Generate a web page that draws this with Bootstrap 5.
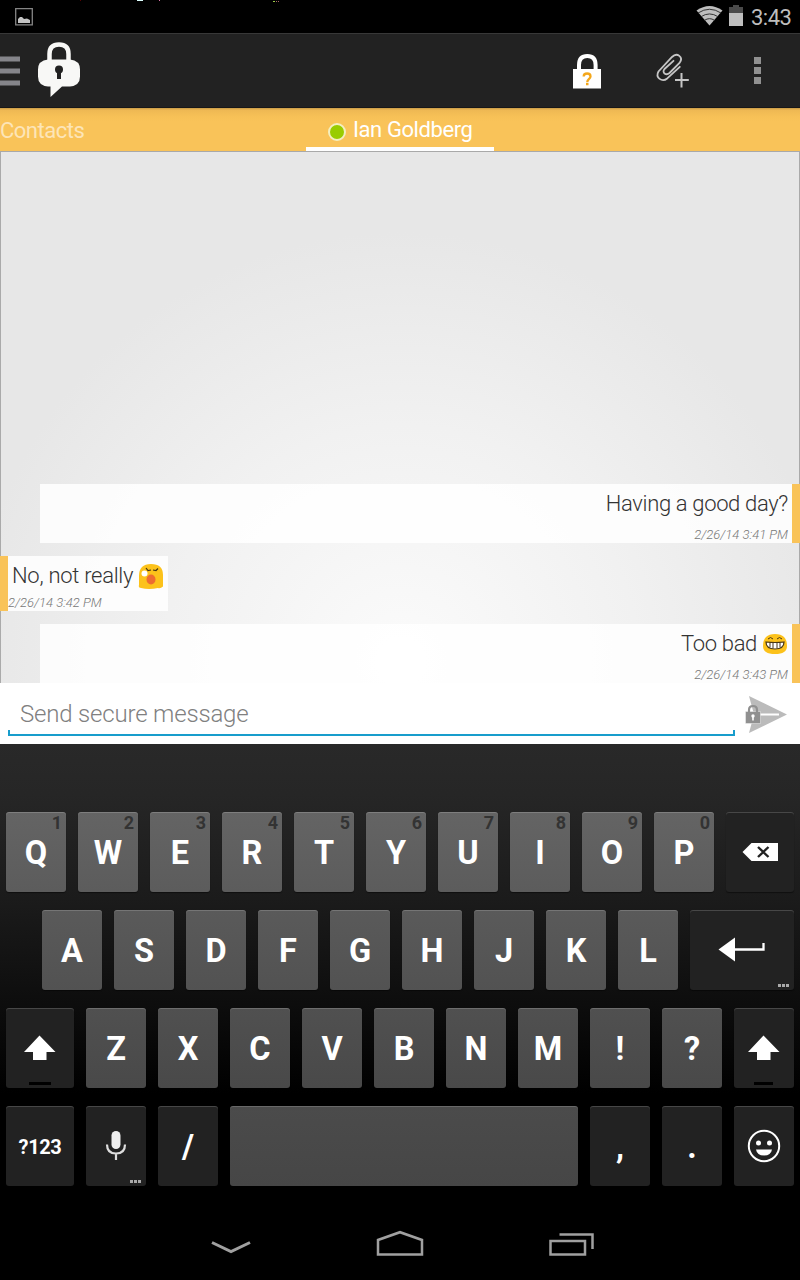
<!DOCTYPE html>
<html lang="en">
<head>
<meta charset="utf-8">
<meta name="viewport" content="width=device-width, initial-scale=1">
<title>Secure chat</title>
<link href="https://cdn.jsdelivr.net/npm/bootstrap@5.3.0/dist/css/bootstrap.min.css" rel="stylesheet">
<style>
body{font-family:Roboto,"Liberation Sans",sans-serif;background:#000;width:800px;height:1280px;overflow:hidden;line-height:1}
svg{display:block;flex:none}
.status-bar{height:33px;color:#bebebe;font-size:22px}
.clock{width:41px;line-height:35px;white-space:nowrap;letter-spacing:-.5px}
.action-bar{height:75px;background:#222;border-top:1px solid #383838;border-bottom:1px solid #171717}
.tab-strip{height:44px;background:linear-gradient(#c79a48 0,#eeb853 2px,#f6c056 8px,#f9c359 14px);border-bottom:1px solid #a9a9a9;font-size:22px;line-height:45px;letter-spacing:-.42px}
.tab-side{width:306px;color:#fde5b8;letter-spacing:-.5px}
.tab-current{width:188px;color:#fff;border-bottom:4px solid #fff;padding:4px 0 0 22px;height:43px}
.dot{width:18px;height:18px;border-radius:50%;background:#9c0;border:2px solid #f3efc0;margin:4px 7px 0 0}
.chat{height:531px;background:radial-gradient(ellipse 430px 430px at 400px 510px,#fbfbfb,#f1f1f1 55%,#e7e7e7);border-left:1px solid #aaa;border-right:1px solid #aaa}
.bubble{background:rgba(255,255,255,.85);color:#333;font-size:22px;font-weight:300}
.sent{height:59px;margin-left:39px;margin-right:-1px;border-right:8px solid #f9c359;padding:8px 4px 0 0;text-align:right}
.received{height:55px;width:168px;margin:13px 0 13px -1px;border-left:8px solid #f9c359;padding-top:8px}
.line-text{height:24px;line-height:24px;white-space:nowrap;letter-spacing:-.34px}
.received .line-text{letter-spacing:-.28px}
.stamp{font-size:13px;font-style:italic;color:#777;line-height:15px;margin-top:11px}
.received .stamp{margin-top:7px}
.compose{height:61px;background:#fff;padding-left:8px}
.field{width:727px;height:53px;color:#808080;font-weight:300;font-size:24px;line-height:62px;padding-left:12px;letter-spacing:-.18px}
.field::after{content:"";position:absolute;left:0;right:0;bottom:0;height:6px;border:2px solid #189dcc;border-top:0}
.keyboard{height:472px;background:linear-gradient(#292929 0,#262626 50px,#1b1b1b 155px,#0d0d0d 260px,#000 350px);padding:68px 6px 0}
.key-row{gap:12px;height:80px;margin-bottom:18px}
.key{width:60px;height:80px;border-radius:3px;color:#fff;font-weight:700;font-size:32.5px;box-shadow:inset 0 1px rgba(255,255,255,.17),0 1px 1px rgba(0,0,0,.45);padding-top:3px}
.r1 .key{background:linear-gradient(#646464,#5c5c5c)}
.r2 .key{background:linear-gradient(#5a5a5a,#525252)}
.r3 .key{background:linear-gradient(#505050,#494949)}
.r4 .key{background:linear-gradient(#4b4b4b,#464646)}
.key-row .dark{background:#222}
.dark svg{margin-top:-3px}
.w68{width:68px}.w104{width:104px}.w348{width:348px}
.mode-key{font-size:20px;letter-spacing:-.4px;padding-top:1px}
.hint{position:absolute;right:4px;top:2px;font-size:18px;color:#333}
.more{position:absolute;right:5px;bottom:3px;width:11px;height:3px;background:linear-gradient(90deg,#aaa 3px,#222 3px 4px,#aaa 4px 7px,#222 7px 8px,#aaa 8px)}
.led{position:absolute;left:50%;bottom:3px;width:22px;height:3px;margin-left:-11px;background:#000}
.led-short{width:19px;margin-left:-10px}
.nav-keys{height:64px}
</style>
</head>
<body class="d-flex flex-column">
<div class="status-bar d-flex align-items-start flex-shrink-0 pe-2">
  <svg width="280" height="33" viewBox="0 0 280 33"><path d="M137 0h6v1h-6z" fill="#dff"/><path d="M159 0h1v1h-1z" fill="#d7a"/><path d="M273 1h2v1h-2z" fill="#9c4"/><path d="M276 1h1v1h-1zM278 1h1v1h-1z" fill="#a66"/><path d="M80 0h1v1h-1z" fill="#500"/><path d="M15.700 8.700h16.600v16.100H15.700z" fill="none" stroke="#858585" stroke-width="1.300"/><path d="M18 23v-4l2-2h2l2 2 3-0.500 3 1.500v3z" fill="#c4c4c4"/></svg>
  <svg class="ms-auto" width="56" height="33" viewBox="695 0 56 33"><path d="M709.500 25.500 696.500 10.500Q709.500 1.500 722.500 10.500z" fill="#bebebe"/><path d="M698 13q11.500-7.500 23 0M701 16.700q8.500-5.500 17 0M704.500 20.300q5-3.300 10 0" fill="none" stroke="#333" stroke-width="1"/><path d="M729 7h4V5h6v2h4v6h-14z" fill="#4a4a4a"/><path d="M729 13h14v13h-14z" fill="#bebebe"/></svg>
  <div class="clock">3:43</div>
</div>
<header class="action-bar d-flex align-items-start flex-shrink-0">
  <svg width="90" height="73" viewBox="0 34 90 73"><path d="M0 56.500h20v5H0zM0 68.500h20v5H0zM0 80.500h20v5H0z" fill="#85858a"/><path d="M49.500 62v-8q0-9.500 9.500-9.500t9.500 9.500v8" fill="none" stroke="#f8f8f6" stroke-width="4.500"/><path d="M48 59.500h22q10 1 10 10v7q0 9-10 10h-8l-11.500 10.500v-10.500h-2.500q-10-1-10-10v-7q0-9 10-10z" fill="#f8f8f6"/><circle cx="59" cy="69.500" r="4" fill="#222"/><path d="M57 71h4v8h-4z" fill="#222"/></svg>
  <svg class="ms-auto" width="250" height="73" viewBox="550 34 250 73"><path d="M579 71v-6q0-9 8.300-9t8.300 9v6" fill="none" stroke="#fff" stroke-width="4"/><path d="M573 69h28v19.500h-28z" fill="#fff"/><path d="M583.700 76.500q0-3 3.400-3t3.400 3c0 2.200-3.200 2.600-3.200 5.500M586 84h2.500" fill="none" stroke="#f4a71b" stroke-width="2.300"/><path d="M679.800 66.800 667.500 78.200C662 83 655 77.500 658.500 71.500L672 57C677 52 684 57 679.500 63L669.500 73C666 76 661.500 72.500 664.500 69L673.500 60.800" fill="none" stroke="#c6c6c6" stroke-width="1.800" stroke-linecap="round"/><path d="M681.500 73v14.500M675 80h13.800" stroke="#c6c6c6" stroke-width="2"/><path d="M754 57h7v7h-7zM754 67h7v7h-7zM754 77h7v7h-7z" fill="#919191"/></svg>
</header>
<nav class="tab-strip d-flex flex-shrink-0">
  <div class="tab-side">Contacts</div>
  <div class="tab-current d-flex align-items-center"><span class="dot flex-shrink-0"></span><span class="text-nowrap">Ian Goldberg</span></div>
</nav>
<main class="chat d-flex flex-column justify-content-end flex-shrink-0">
  <div class="bubble sent"><div class="line-text">Having a good day?</div><div class="stamp">2/26/14 3:41 PM</div></div>
  <div class="bubble received"><div class="line-text d-flex ps-1"><span>No, not really</span>
    <svg class="ms-1" width="26" height="26" viewBox="137 564 26 26"><path d="M139 585v-9q0-12 12-12t12 11v7l.5 4q-3 3-5.500 2-9 2-17 0-3 0-2-3z" fill="#fcc21b"/><circle cx="144.500" cy="573.500" r="3" fill="#fff"/><ellipse cx="151" cy="579.500" rx="4.500" ry="5" fill="#ed6c30"/><path d="m146 568 2 2.500 3-.5M153 570l3 .5 2-2" fill="none" stroke="#443515" stroke-width="1.200"/></svg></div><div class="stamp">2/26/14 3:42 PM</div></div>
  <div class="bubble sent"><div class="line-text d-flex justify-content-end"><span>Too bad</span>
    <svg style="margin-left:6px" width="25" height="24" viewBox="763 632 25 24"><path d="M763 646q0-12 12-12t12 12q0 8-12 8t-12-8z" fill="#fcc21b"/><path d="M766 642q9 1 18 0 0 7-9 7t-9-7z" fill="#fff" stroke="#493716" stroke-width="1.200"/><path d="M770 643v4M773 643v5M777 643v5M780 643v4M768 639l2.500-1.500 2.500 1.500M777 639l2.500-1.500 2.500 1.500" fill="none" stroke="#493716" stroke-width="1"/></svg></div><div class="stamp">2/26/14 3:43 PM</div></div>
</main>
<section class="compose d-flex flex-shrink-0">
  <div class="field position-relative">Send secure message</div>
  <svg width="65" height="61" viewBox="735 683 65 61"><path d="m749 696 38 18.500-38 18.500 5-18.500z" fill="#bbb"/><path d="M760 714.500h19" stroke="#fff" stroke-width="2"/><path d="M745.500 711.500h15v12h-15z" fill="#909090" stroke="#fff" stroke-opacity=".4"/><path d="M749 712v-2q0-4 4-4t4 4v2" fill="none" stroke="#909090" stroke-width="2.200"/><circle cx="753" cy="716" r="1.700" fill="#fff"/><path d="M752.200 716h1.600v4.500h-1.600z" fill="#fff"/></svg>
</section>
<section class="keyboard flex-shrink-0">
  <div class="key-row r1 d-flex">
    <div class="key position-relative d-flex align-items-center justify-content-center">Q<span class="hint">1</span></div>
    <div class="key position-relative d-flex align-items-center justify-content-center">W<span class="hint">2</span></div>
    <div class="key position-relative d-flex align-items-center justify-content-center">E<span class="hint">3</span></div>
    <div class="key position-relative d-flex align-items-center justify-content-center">R<span class="hint">4</span></div>
    <div class="key position-relative d-flex align-items-center justify-content-center">T<span class="hint">5</span></div>
    <div class="key position-relative d-flex align-items-center justify-content-center">Y<span class="hint">6</span></div>
    <div class="key position-relative d-flex align-items-center justify-content-center">U<span class="hint">7</span></div>
    <div class="key position-relative d-flex align-items-center justify-content-center">I<span class="hint">8</span></div>
    <div class="key position-relative d-flex align-items-center justify-content-center">O<span class="hint">9</span></div>
    <div class="key position-relative d-flex align-items-center justify-content-center">P<span class="hint">0</span></div>
    <div class="key dark w68 d-flex align-items-center justify-content-center"><svg width="36" height="20" viewBox="742 842 36 20"><path d="m742.500 852 9-9H778v18h-26.500z" fill="#fff"/><path d="m758 847 10.500 10M768.500 847 758 857" stroke="#222" stroke-width="2.400"/></svg></div>
  </div>
  <div class="key-row r2 d-flex justify-content-end">
    <div class="key d-flex align-items-center justify-content-center">A</div>
    <div class="key d-flex align-items-center justify-content-center">S</div>
    <div class="key d-flex align-items-center justify-content-center">D</div>
    <div class="key d-flex align-items-center justify-content-center">F</div>
    <div class="key d-flex align-items-center justify-content-center">G</div>
    <div class="key d-flex align-items-center justify-content-center">H</div>
    <div class="key d-flex align-items-center justify-content-center">J</div>
    <div class="key d-flex align-items-center justify-content-center">K</div>
    <div class="key d-flex align-items-center justify-content-center">L</div>
    <div class="key dark w104 position-relative d-flex align-items-center justify-content-center"><svg width="48" height="26" viewBox="718 937 48 26"><path d="m718.500 949.500 16.500-12v24z" fill="#fff"/><path d="M735 949.500h28.500V943" fill="none" stroke="#fff" stroke-width="2.300"/></svg><span class="more"></span></div>
  </div>
  <div class="key-row r3 d-flex">
    <div class="key dark w68 position-relative d-flex align-items-center justify-content-center"><svg width="32" height="26" viewBox="24 1035 32 26"><path d="m39.500 1035.500 16 16.500h-9v8H33v-8h-9z" fill="#fff"/></svg><span class="led"></span></div>
    <div class="key d-flex align-items-center justify-content-center">Z</div>
    <div class="key d-flex align-items-center justify-content-center">X</div>
    <div class="key d-flex align-items-center justify-content-center">C</div>
    <div class="key d-flex align-items-center justify-content-center">V</div>
    <div class="key d-flex align-items-center justify-content-center">B</div>
    <div class="key d-flex align-items-center justify-content-center">N</div>
    <div class="key d-flex align-items-center justify-content-center">M</div>
    <div class="key d-flex align-items-center justify-content-center">!</div>
    <div class="key d-flex align-items-center justify-content-center">?</div>
    <div class="key dark position-relative d-flex align-items-center justify-content-center"><svg width="32" height="26" viewBox="24 1035 32 26"><path d="m39.500 1035.500 16 16.500h-9v8H33v-8h-9z" fill="#fff"/></svg><span class="led led-short"></span></div>
  </div>
  <div class="key-row r4 d-flex">
    <div class="key dark w68 mode-key d-flex align-items-center justify-content-center">?123</div>
    <div class="key dark position-relative d-flex align-items-center justify-content-center"><svg width="22" height="30" viewBox="105 1131 22 30"><rect x="111.500" y="1131" width="9" height="18" rx="4.500" fill="#eee"/><path d="M107 1144.500q0 9 9 9t9-9M116 1153.500v6.500" fill="none" stroke="#ddd" stroke-width="2.200"/></svg><span class="more"></span></div>
    <div class="key dark d-flex align-items-center justify-content-center">/</div>
    <div class="key w348"></div>
    <div class="key dark d-flex align-items-center justify-content-center">,</div>
    <div class="key dark d-flex align-items-center justify-content-center">.</div>
    <div class="key dark d-flex align-items-center justify-content-center"><svg width="34" height="34" viewBox="746.500 1128.500 34 34"><circle cx="763.500" cy="1145.500" r="15.200" fill="none" stroke="#fff" stroke-width="2"/><circle cx="758" cy="1142.500" r="2.500" fill="#fff"/><circle cx="769" cy="1142.500" r="2.500" fill="#fff"/><path d="M755.500 1149h16q-1 6-8 6t-8-6z" fill="#fff"/></svg></div>
  </div>
</section>
<footer class="nav-keys flex-shrink-0">
  <svg width="800" height="64" viewBox="0 1216 800 64" fill="none" stroke="#a0a0a0" stroke-width="2.500"><path d="m212 1242.500 19 9 19-9" stroke-width="3"/><path d="M378 1254.500v-14.500l22-7.800 22 7.800v14.500z"/><path d="M550.500 1241H585v13.500h-34.500zM559.500 1234.500h33v14.500"/></svg>
</footer>
<script src="https://cdn.jsdelivr.net/npm/bootstrap@5.3.0/dist/js/bootstrap.bundle.min.js"></script>
</body>
</html>
